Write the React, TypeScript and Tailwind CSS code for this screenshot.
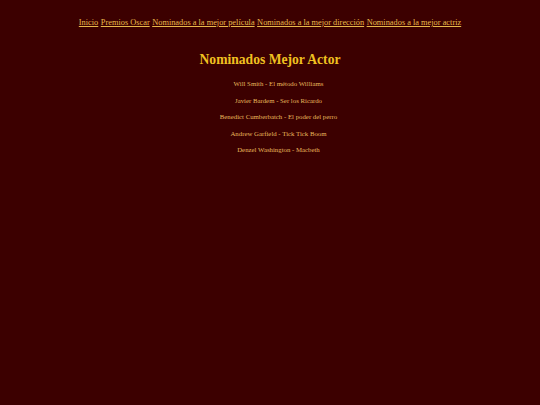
const links = [
  'Inicio',
  'Premios Oscar',
  'Nominados a la mejor película',
  'Nominados a la mejor dirección',
  'Nominados a la mejor actriz',
]

const nominees = [
  'Will Smith - El método Williams',
  'Javier Bardem - Ser los Ricardo',
  'Benedict Cumberbatch - El poder del perro',
  'Andrew Garfield - Tick Tick Boom',
  'Denzel Washington - Macbeth',
]

export default function App() {
  return (
    <div className="min-h-[405px] w-full bg-[#3c0000] font-['Liberation_Serif',serif]">
      <nav className="flex justify-center gap-[2.5px] pt-[17px] text-[8.35px] leading-[12px] text-[#e8b84a]">
        {links.map((l) => (
          <a key={l} href="#" className="underline">
            {l}
          </a>
        ))}
      </nav>
      <h1 className="mt-[21px] text-center text-[13.6px] font-bold leading-[20px] text-[#f0c020]">
        Nominados Mejor Actor
      </h1>
      <ul className="mt-[9px] flex flex-col items-center gap-[6.5px] pl-[17px] text-[6.8px] leading-[10px] text-[#e8b85c]">
        {nominees.map((n) => (
          <li key={n}>{n}</li>
        ))}
      </ul>
    </div>
  )
}
